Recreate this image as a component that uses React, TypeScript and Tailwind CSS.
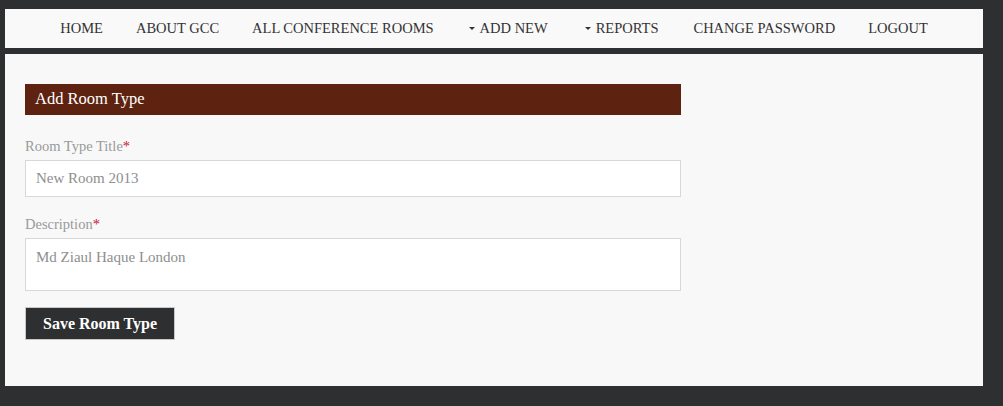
const navItems = [
  { label: "HOME", caret: false },
  { label: "ABOUT GCC", caret: false },
  { label: "ALL CONFERENCE ROOMS", caret: false },
  { label: "ADD NEW", caret: true },
  { label: "REPORTS", caret: true },
  { label: "CHANGE PASSWORD", caret: false },
  { label: "LOGOUT", caret: false },
];

const serif = "font-['Liberation_Serif','Times_New_Roman',serif]";

const Caret = () => (
  <span className="inline-block w-0 h-0 mr-[5px] border-l-[3px] border-r-[3px] border-t-[3px] border-l-transparent border-r-transparent border-t-[#333] align-middle" />
);

const Field = ({
  label,
  value,
  multiline,
}: {
  label: string;
  value: string;
  multiline?: boolean;
}) => (
  <div className={multiline ? "mb-[16px]" : "mb-[18px]"}>
    <label className="block text-[14.5px] leading-[18px] text-[#9a9a9a] mb-[5px]">
      {label}
      <span className="text-[#c8102e]">*</span>
    </label>
    {multiline ? (
      <div className="h-[53px] bg-white border border-[#d8d8d8] px-[10px] pt-[8px] text-[15px] leading-[20px] text-[#8e8e8e]">
        {value}
      </div>
    ) : (
      <div className="h-[37px] bg-white border border-[#d8d8d8] px-[10px] flex items-center text-[15px] text-[#8e8e8e]">
        {value}
      </div>
    )}
  </div>
);

export default function App() {
  return (
    <div className={`min-h-[406px] bg-[#2e2f31] pt-[9px] pl-[5px] pr-[20px] pb-[20px] ${serif}`}>
      <nav className="h-[39px] bg-[#f9f9f9] flex justify-center items-center">
        {navItems.map((item) => (
          <a
            key={item.label}
            href="#"
            className="px-[16.5px] text-[14.5px] text-[#333] flex items-center whitespace-nowrap"
            style={item.caret ? { marginLeft: 2, marginRight: 2 } : undefined}
          >
            {item.caret && <Caret />}
            {item.label}
          </a>
        ))}
      </nav>
      <main className="mt-[6px] h-[332px] bg-[#f8f8f8] pl-[20px] pt-[30px]">
        <div className="w-[656px]">
          <h2 className="h-[31px] bg-[#5e2310] text-white text-[16.5px] px-[10px] flex items-center">
            Add Room Type
          </h2>
          <div className="mt-[22px]">
            <Field label="Room Type Title" value="New Room 2013" />
            <Field label="Description" value="Md Ziaul Haque London" multiline />
          </div>
          <button className="h-[33px] px-[17px] bg-[#2e2f31] border border-[#c9c9c9] text-white font-bold text-[16px]">
            Save Room Type
          </button>
        </div>
      </main>
    </div>
  );
}
